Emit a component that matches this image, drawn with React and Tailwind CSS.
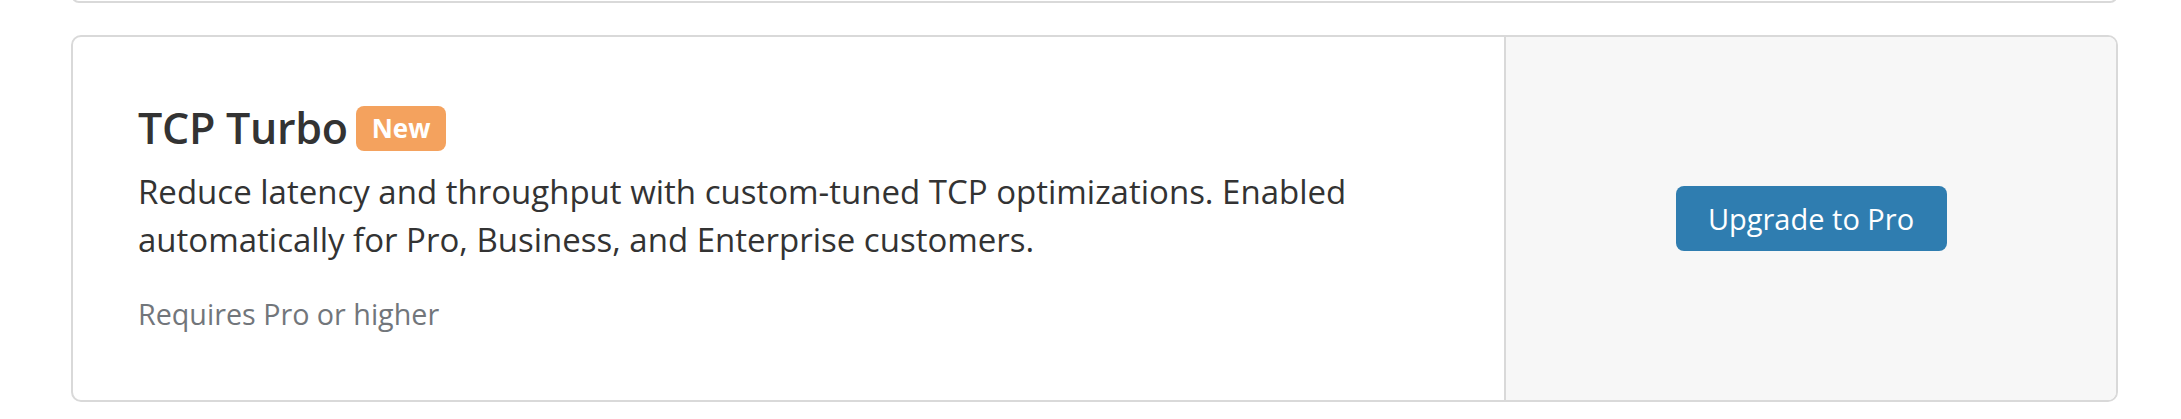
export default function App() {
  const font = { fontFamily: '"Open Sans", "Noto Sans", sans-serif' };
  return (
    <div className="w-[2181px] h-[419px] bg-white overflow-hidden" style={font}>
      <div className="ml-[71px] w-[2047px] h-[3px] overflow-hidden">
        <div className="-mt-[40px] h-[43px] border-2 border-[#d9d9d9] rounded-lg" />
      </div>
      <div className="ml-[71px] mt-[32px] w-[2047px] h-[367px] flex border-2 border-[#d9d9d9] rounded-[10px] overflow-hidden">
        <div className="flex-1 flex flex-col justify-center px-[65px] text-[#333333]">
          <div className="flex items-center gap-[8px] h-[50px]">
            <h2 className="text-[43px] leading-[50px] font-semibold tracking-[-0.3px]">TCP Turbo</h2>
            <span className="h-[45px] px-[16px] flex items-center rounded-lg bg-[#f4a25e] text-white text-[26px] font-bold leading-none">
              New
            </span>
          </div>
          <p className="mt-[15px] text-[33px] leading-[48px]">
            Reduce latency and throughput with custom-tuned TCP optimizations. Enabled automatically for Pro, Business, and Enterprise customers.
          </p>
          <p className="mt-[30px] text-[28.7px] leading-[40px] text-[#72767b]">Requires Pro or higher</p>
        </div>
        <div className="w-[612px] shrink-0 border-l-2 border-[#d9d9d9] bg-[#f7f7f7] flex items-center justify-center">
          <button className="w-[271px] h-[65px] rounded-lg bg-[#2f7db0] text-white text-[29px] leading-none">
            Upgrade to Pro
          </button>
        </div>
      </div>
    </div>
  );
}
